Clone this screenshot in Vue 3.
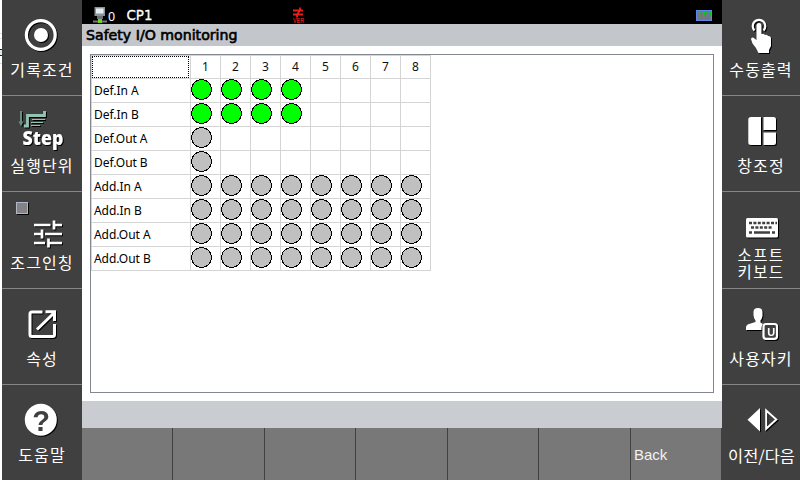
<script setup>
const columns = [1, 2, 3, 4, 5, 6, 7, 8]
const rows = [
  { name: 'Def.In A', count: 4, on: true },
  { name: 'Def.In B', count: 4, on: true },
  { name: 'Def.Out A', count: 1, on: false },
  { name: 'Def.Out B', count: 1, on: false },
  { name: 'Add.In A', count: 8, on: false },
  { name: 'Add.In B', count: 8, on: false },
  { name: 'Add.Out A', count: 8, on: false },
  { name: 'Add.Out B', count: 8, on: false },
]
const functionKeys = ['', '', '', '', '', '', 'Back']
</script>

<template>
  <div class="screen">
    <div class="edge"><i class="faint"></i><i class="faint"></i><i class="mark"></i><i class="faint"></i></div>

    <nav class="side left">
      <button class="key">
        <svg viewBox="2 0 80 58" class="icon">
          <circle cx="40.8" cy="35" r="14.4" fill="none" stroke="#fff" stroke-width="3.2" />
          <circle cx="41" cy="35" r="7" fill="#fff" />
        </svg>
        <span class="label">기록조건</span>
      </button>
      <button class="key">
        <svg viewBox="2 96 80 58" class="icon">
          <g class="flat" fill="none" stroke="#91c5b3">
            <path d="M21 111V123" stroke="#639083" stroke-width="2" />
            <path d="M46 112.500H44.500V115.500H27.500V126H24" stroke-width="2.800" />
            <path d="M32 119.500H45M31 122.500H43M31 125.500H40" stroke-width="1" />
          </g>
          <path d="M18.500 121.500h5l-2.500 5z" fill="#639083" />
          <text x="22.500" y="145" class="step" textLength="41" lengthAdjust="spacingAndGlyphs">Step</text>
        </svg>
        <span class="label">실행단위</span>
      </button>
      <button class="key">
        <svg viewBox="2 192 80 58" class="icon">
          <rect x="16.500" y="202.500" width="11" height="11" fill="#848284" stroke="#b0b8c8" />
          <path d="M34 225H50.500M54 225H62M54 220.500V229.500M34 234H42M45 234H62M42 229.500V238.500M34 243H45M48.500 243H62M48.500 238.500V247.500" fill="none" stroke="#fff" stroke-width="2.700" />
        </svg>
        <span class="label low">조그인칭</span>
      </button>
      <button class="key">
        <svg viewBox="2 289 80 58" class="icon">
          <g fill="none" stroke="#fff" stroke-width="3">
            <path d="M42.500 312H32Q30 312 30 314V334.500Q30 336.500 32 336.500H52.500Q54.500 336.500 54.500 334.500V324" />
            <path d="M45.500 311.800H54.500V321M37 329.500L54 313" />
          </g>
        </svg>
        <span class="label">속성</span>
      </button>
      <button class="key">
        <svg viewBox="2 385 80 58" class="icon">
          <circle cx="40.800" cy="419.800" r="16" fill="#fff" />
          <text x="41" y="430.800" text-anchor="middle" class="question">?</text>
        </svg>
        <span class="label">도움말</span>
      </button>
    </nav>

    <main class="main">
      <header class="topbar">
        <svg viewBox="82 0 640 24" class="status">
          <rect x="94.500" y="7" width="10.500" height="9" fill="#8b9299" />
          <rect x="96" y="8.500" width="7.500" height="5" fill="#e4edf1" />
          <path d="M97 16h6v3h-6z" fill="#707070" />
          <path d="M93 21.500h14" stroke="#777" stroke-width="2" />
          <rect x="98" y="19" width="4" height="4" fill="#6bd820" />
          <text x="108" y="20.500" class="port">0</text>
          <text x="126.500" y="19.500" class="unit" textLength="26" lengthAdjust="spacingAndGlyphs">CP1</text>
          <path d="M293 10.500h10M293 14.500h10M300 7.500v3l-3 4v3" fill="none" stroke="#e8201c" stroke-width="1.800" />
          <text x="293" y="22.700" class="ver" textLength="11" lengthAdjust="spacingAndGlyphs">VER</text>
          <rect x="696.500" y="10.500" width="15" height="10" fill="#75797e" stroke="#5e88e8" />
          <path d="M701.500 11v9M705.500 11v9M708.500 11v9" stroke="#5674ac" stroke-width="0.800" />
          <path d="M699 12.500h2M703 12.500h2M706 12.500h2M709 12.500h2M703 14.500h2M707 14.500h1M710 14.500h1" stroke="#16c428" />
        </svg>
      </header>
      <h1 class="title"><svg width="160" height="22"><text x="4" y="16" textLength="151.500" lengthAdjust="spacingAndGlyphs">Safety I/O monitoring</text></svg></h1>

      <section class="content">
        <div class="panel">
          <div class="table">
            <div class="cell corner"><div class="focus"></div></div>
            <div v-for="c in columns" :key="c" class="cell head">{{ c }}</div>
            <template v-for="row in rows" :key="row.name">
              <div class="cell name">{{ row.name }}</div>
              <div v-for="c in columns" :key="c" class="cell">
                <svg v-if="c <= row.count" width="21" height="21" class="lamp" shape-rendering="crispEdges">
                  <circle cx="10.500" cy="10.500" r="10" :fill="row.on ? '#00ff00' : '#c0c0c0'" stroke="#000" />
                </svg>
              </div>
            </template>
          </div>
        </div>
      </section>

      <div class="message"></div>
      <footer class="fkeys">
        <button v-for="(label, i) in functionKeys" :key="i" class="fkey">{{ label }}</button>
      </footer>
    </main>

    <nav class="side right">
      <button class="key">
        <svg viewBox="722 0 78 58" class="icon">
          <path d="M754.500 30.500A6.300 6.300 0 1 1 763.500 30.500" fill="none" stroke="#fff" stroke-width="2.200" />
          <path d="M756.500 25.500Q756.500 23 759 23T761.500 25.500V34Q763.500 33 765 35Q767 34.300 768 36Q771 35.800 771 38.500V46L769 50V53H758.500Q757 48.500 752.500 43.500L751 39Q752 36.500 754.500 38.500L756.500 40Z" fill="#fff" />
        </svg>
        <span class="label">수동출력</span>
      </button>
      <button class="key">
        <svg viewBox="722 96 78 58" class="icon">
          <path d="M761 117V145H751Q748.300 145 748.300 142.500V119.500Q748.300 117 751 117ZM763.500 117H773.500Q776 117 776 119.500V130H763.500ZM763.500 132.500H776V142.500Q776 145 773.500 145H763.500Z" fill="#fff" />
        </svg>
        <span class="label">창조정</span>
      </button>
      <button class="key">
        <svg viewBox="722 192 78 54" class="icon short">
          <rect x="746" y="218" width="32" height="19.500" rx="1.500" fill="#fff" />
          <path d="M749 223H777" stroke="#404040" stroke-width="2.500" stroke-dasharray="3 1.400" />
          <path d="M751 227.500H773" stroke="#404040" stroke-width="2.500" stroke-dasharray="3 1.400" />
          <path d="M749 232.500h3M754 232.500h16M772 232.500h3" stroke="#404040" stroke-width="2.600" />
        </svg>
        <span class="label double">소프트<br>키보드</span>
      </button>
      <button class="key">
        <svg viewBox="722 289 78 58" class="icon">
          <path d="M753.500 312Q753.500 308 758 308T762.500 312V316Q762 319 760.500 320.500V322.500L763 324Q761.500 325 761.500 330H746V327.500Q746 325 749 324L755.500 322V320.500Q753.500 318 753.500 315Z" fill="#fff" />
          <rect x="763.500" y="324" width="13.500" height="14.800" rx="2.500" fill="#404040" stroke="#fff" stroke-width="2.200" />
          <text x="771.300" y="335.500" text-anchor="middle" class="user">U</text>
        </svg>
        <span class="label">사용자키</span>
      </button>
      <button class="key">
        <svg viewBox="722 385 78 58" class="icon">
          <path d="M760 408V431.500L747.500 419.700Z" fill="#fff" />
          <path d="M766.200 410.500V428.700L776.300 419.600Z" fill="none" stroke="#fff" stroke-width="2" />
        </svg>
        <span class="label"><svg width="78" height="24"><text x="6" y="18.500" textLength="67" lengthAdjust="spacingAndGlyphs">이전/다음</text></svg></span>
      </button>
    </nav>
  </div>
</template>

<style>
body { margin: 0; overflow: hidden; }
</style>

<style scoped>
* { box-sizing: border-box; }
.screen {
  width: 800px;
  height: 480px;
  display: grid;
  grid-template-columns: 2px 80px 640px 78px;
  background: #fff;
  font-family: "Noto Sans", "Noto Sans CJK KR", sans-serif;
}
.edge { display: flex; flex-direction: column; padding-top: 33px; }
.edge i { height: 1px; margin-bottom: 4px; }
.faint { background: #ddd; }
.edge .mark { height: 7px; margin: 6px 0 7px; border: solid #222; border-width: 1px 0; background: #dcebea; }
button { border: 0; padding: 0; margin: 0; background: none; font: inherit; color: inherit; }
.side {
  display: grid;
  grid-template-rows: 96px 96px 97px 96px 95px;
  background: #404040;
  color: #fff;
}
.key {
  display: flex;
  flex-direction: column;
  align-items: center;
  border-bottom: 1px solid #868686;
}
.key:last-child { border-bottom: 0; }
.icon { display: block; width: 100%; height: 58px; flex: none; filter: drop-shadow(1px 1px 0.5px #000); }
.icon.short { height: 54px; }
.label {
  font-family: "Noto Sans CJK KR", sans-serif;
  font-size: 16px;
  line-height: 22px;
  letter-spacing: 1.1px;
  margin-right: 0;
  white-space: nowrap;
}
.label svg { display: block; fill: #fff; letter-spacing: 0; }
.low { padding-top: 1px; }
.double { font-size: 15.500px; letter-spacing: 1.400px; line-height: 17px; }
.step { font: 800 20px "Open Sans", sans-serif; fill: #fff; }
.question { font: bold 29px "Liberation Sans", sans-serif; fill: #404040; }
.user { font: bold 11px "Liberation Sans", sans-serif; fill: #fff; }
.main { display: grid; grid-template-rows: 24px 22px 355px 27px 52px; }
.topbar { background: #000; }
.status { display: block; width: 640px; height: 24px; }
.port { font: 12.500px "Noto Sans", sans-serif; fill: #fff; }
.unit { font: 500 14px "DejaVu Sans", sans-serif; fill: #fff; stroke: #fff; stroke-width: 0.3px; }
.ver { font: bold 6.500px "Liberation Sans", sans-serif; fill: #d81818; }
.title { margin: 0; background: #c3c7cb; }
.title svg { display: block; font: 13.500px "DejaVu Sans", sans-serif; stroke: #000; stroke-width: 0.6px; }
.content { padding: 8px 8px 8px; background: #fff; }
.panel { height: 339px; width: 624px; border: 1px solid #828790; }
.table {
  display: grid;
  grid-template-columns: 100px repeat(8, 30px);
  grid-auto-rows: 24px;
  width: 340px;
  background: linear-gradient(#d4d4d4, #d4d4d4) 0 0 / 100% 1px no-repeat, linear-gradient(#d4d4d4, #d4d4d4) 0 0 / 1px 100% no-repeat;
}
.cell { border: solid #d4d4d4; border-width: 0 1px 1px 0; }
.corner { padding: 1px 1px 0 1px; }
.focus { height: 22px; border: 1px dotted #000; }
.head { font-size: 12px; line-height: 23px; text-align: center; color: #111; }
.name { padding-left: 3px; font-size: 12px; line-height: 23px; letter-spacing: -0.05px; color: #000; }
.lamp { display: block; }
.message { background: #c9cdd2; }
.fkeys { display: grid; grid-template-columns: 91px 92px 91px 92px 91px 92px 91px; background: #787878; }
.fkey {
  border-right: 1px solid #404040;
  padding: 1px 0 0 3px;
  text-align: left;
  font: 15px "Liberation Sans", sans-serif;
  color: #f2f2f2;
}
</style>
